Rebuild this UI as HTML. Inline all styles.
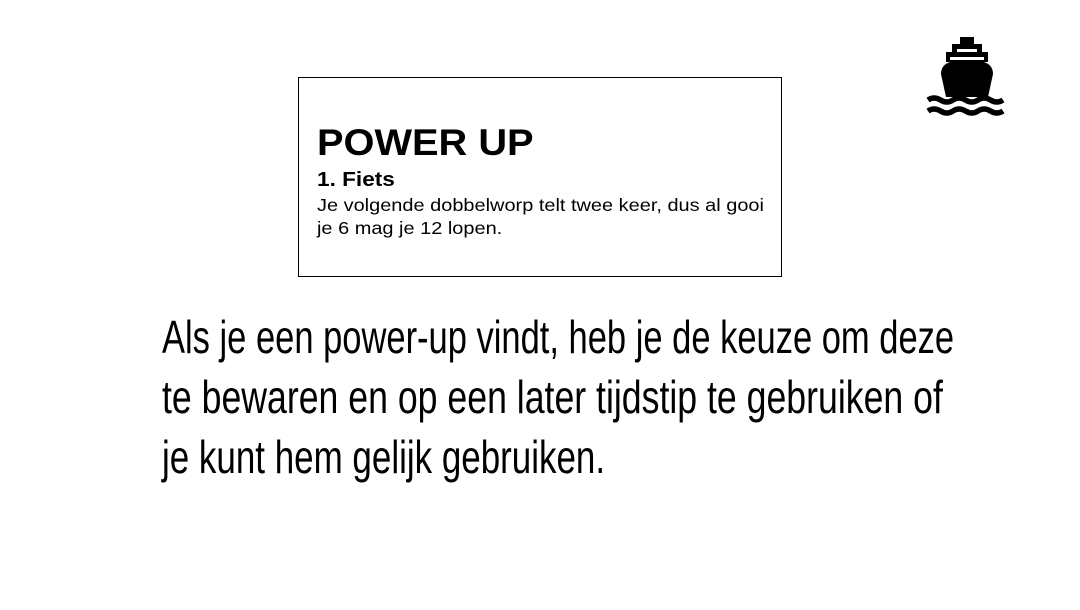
<!DOCTYPE html>
<html><head><meta charset="utf-8"><style>
html,body{margin:0;padding:0;background:#fff;}
body{width:1080px;height:610px;position:relative;overflow:hidden;font-family:"Liberation Sans",sans-serif;color:#000;}
.box{position:absolute;left:298px;top:77px;width:482px;height:198px;border:1px solid #000;}
.t{position:absolute;white-space:nowrap;transform-origin:left top;}
.big{position:absolute;left:162px;font-family:"Liberation Sans Narrow","Liberation Sans",sans-serif;font-size:46px;white-space:nowrap;transform:scaleX(0.75);transform-origin:left top;line-height:1;}
</style></head><body>
<div class="box"></div>
<div class="t" style="left:317px;top:122px;font-size:37px;font-weight:bold;transform:scaleX(1.075);">POWER UP</div>
<div class="t" style="left:317px;top:169px;font-size:20px;font-weight:bold;transform:scaleX(1.13);">1. Fiets</div>
<div class="t" style="left:317px;top:194px;font-size:17.5px;line-height:23px;transform:scaleX(1.14);">Je volgende dobbelworp telt twee keer, dus al gooi<br>je 6 mag je 12 lopen.</div>
<div class="big" style="top:314px;">Als je een power-up vindt, heb je de keuze om deze</div>
<div class="big" style="top:374px;transform:scaleX(0.775);">te bewaren en op een later tijdstip te gebruiken of</div>
<div class="big" style="top:434px;transform:scaleX(0.76);">je kunt hem gelijk gebruiken.</div>
<svg style="position:absolute;left:0;top:0" width="1080" height="610">
<rect x="960" y="37" width="14" height="10" fill="#000"/>
<rect x="952" y="44" width="30" height="9" fill="#000"/>
<rect x="957" y="49" width="20" height="3" fill="#fff"/>
<rect x="946" y="52" width="42" height="10" fill="#000"/>
<rect x="950" y="57" width="34" height="3" fill="#fff"/>
<path d="M941 74 Q941 65 950 62 L984 62 Q993 65 993 74 L988 97 L946 97 Z" fill="#000"/>
<path d="M928 100 Q934 96 940.5 100 T953 100 T965.5 100 T978 100 T990.5 100 T1003 100" fill="none" stroke="#000" stroke-width="5.5"/>
<path d="M928 111 Q934 107 940.5 111 T953 111 T965.5 111 T978 111 T990.5 111 T1003 111" fill="none" stroke="#000" stroke-width="5.5"/>
</svg>
</body></html>
